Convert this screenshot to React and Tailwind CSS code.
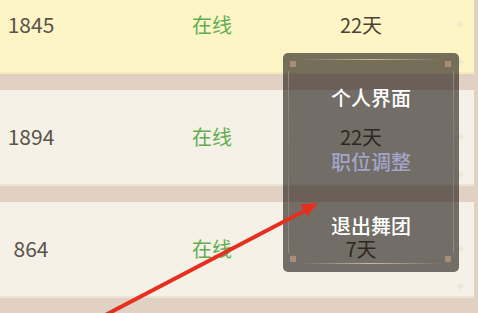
import React from 'react'

const rows = [
  { id: '1845', days: '22天', bg: 'bg-[#fdf5c6]', line: 'border-[#f6ebc0]', first: true },
  { id: '1894', days: '22天', bg: 'bg-[#f5f1e6]', line: 'border-[#ebe3d3]' },
  { id: '864', days: '7天', bg: 'bg-[#f5f1e6]', line: 'border-[#ebe3d3]' },
]

function Row({ r }) {
  return (
    <div className={`relative h-[96px] shrink-0 flex items-center ${r.bg} border-b-2 ${r.line} ${r.first ? 'mt-[-22px]' : ''} mr-[4px]`}>
      <div className="w-[62px] text-center text-[21px] text-[#5b534a]">{r.id}</div>
      <div className="w-[300px] text-center text-[20px] text-[#62ad52]">在线</div>
      <div className="w-[0px] -ml-[1px] flex justify-center">
        <span className="text-[20px] text-[#4c4236] whitespace-nowrap">{r.days}</span>
      </div>
      {/* faint diamonds on the right */}
      <div className="absolute right-[8px] top-[36px] flex flex-col gap-[18px] text-[13px] text-[#ebe2cc] opacity-60">
        <span>✦</span>
        <span>✦</span>
      </div>
    </div>
  )
}

export default function App() {
  return (
    <div
      className="relative w-[478px] h-[313px] overflow-hidden bg-[#e1d0c4]"
      style={{ fontFamily: '"Noto Sans CJK SC", "Noto Sans", sans-serif' }}
    >
      <div className="flex flex-col gap-[16px]">
        {rows.map((r) => (
          <Row key={r.id} r={r} />
        ))}
      </div>

      {/* popup menu */}
      <div className="absolute left-[283px] top-[53px] w-[176px] h-[219px] rounded-[5px] bg-[#1a1510]/60 flex flex-col pt-[13px]">
        <div className="h-[64px] flex items-center justify-center text-[20px] font-medium text-white">个人界面</div>
        <div className="h-[64px] flex items-center justify-center text-[20px] font-medium text-[#a3a4c8]">职位调整</div>
        <div className="h-[64px] flex items-center justify-center text-[20px] font-medium text-white">退出舞团</div>

        {/* frame decoration */}
        <div className="absolute left-[18px] top-[6px] w-[140px] h-[1px] bg-gradient-to-r from-transparent via-[#cbb9a0] to-transparent" />
        <div className="absolute left-[18px] top-[210px] w-[140px] h-[1px] bg-gradient-to-r from-transparent via-[#cbb9a0] to-transparent" />
        <div className="absolute left-[7px] top-[8px] w-[6px] h-[6px] bg-[#a88e78]" />
        <div className="absolute left-[162px] top-[8px] w-[6px] h-[6px] bg-[#a88e78]" />
        <div className="absolute left-[7px] top-[203px] w-[6px] h-[6px] bg-[#a88e78]" />
        <div className="absolute left-[162px] top-[203px] w-[6px] h-[6px] bg-[#a88e78]" />
        <div className="absolute left-[5px] top-[18px] w-[1px] h-[182px] bg-gradient-to-b from-[#a8978a] via-[#8a7d72] to-[#a8978a] opacity-70" />
        <div className="absolute left-[170px] top-[18px] w-[1px] h-[182px] bg-gradient-to-b from-[#a8978a] via-[#8a7d72] to-[#a8978a] opacity-70" />
      </div>

      {/* red annotation arrow */}
      <svg className="absolute inset-0" width="478" height="313" viewBox="0 0 478 313">
        <line x1="92" y1="322" x2="306" y2="210" stroke="#e5301f" strokeWidth="4" strokeLinecap="round" />
        <polygon points="318,203 300.5,204.2 307.1,216.6" fill="#e5301f" />
      </svg>
    </div>
  )
}
